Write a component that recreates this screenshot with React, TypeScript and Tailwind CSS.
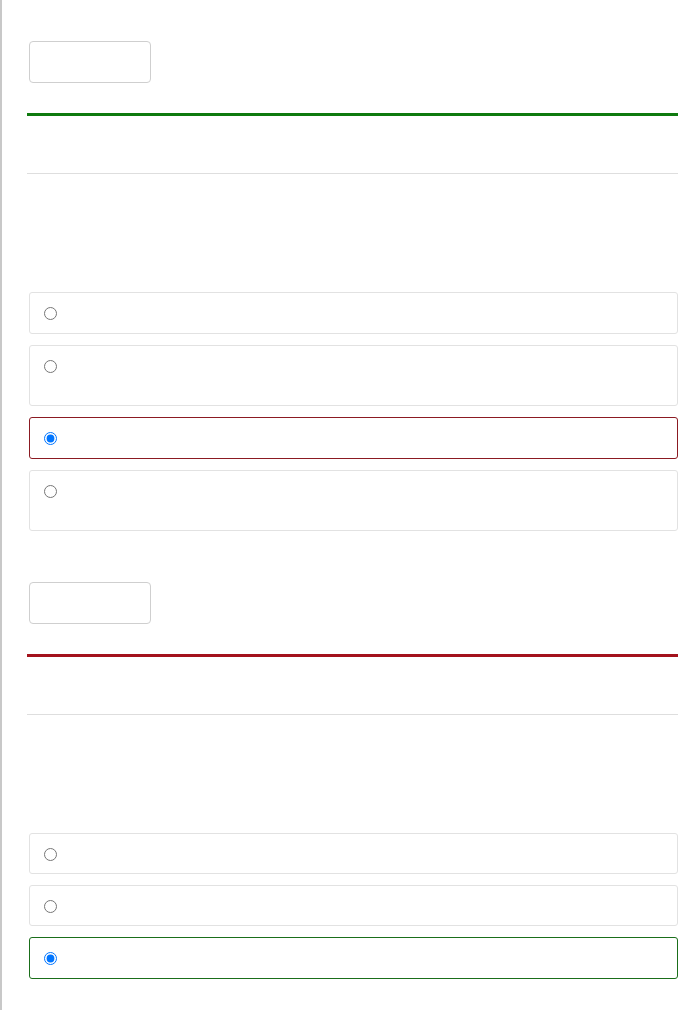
import React from "react";

type Opt = { h: number; checked?: boolean; state?: "bad" | "good" };

function Option({ h, checked, state }: Opt) {
  const border =
    state === "bad" ? "border-[#8b1a22]" : state === "good" ? "border-[#1a6e1a]" : "border-[#e2e2e2]";
  const height = h === 61 ? "h-[61px]" : h === 41 ? "h-[41px]" : "h-[42px]";
  return (
    <label className={`ml-[2px] flex items-start rounded-[3px] border bg-white px-[14px] pt-[14px] ${border} ${height}`}>
      <input type="radio" defaultChecked={checked} className="m-0 h-[13px] w-[13px]" />
    </label>
  );
}

function Section({ color, options }: { color: string; options: Opt[] }) {
  return (
    <div className="flex flex-col">
      <div className="ml-[2px] h-[42px] w-[122px] rounded-[4px] border border-[#cfcfcf] bg-white" />
      <div className={`mt-[30px] h-[3px] ${color}`} />
      <div className="mt-[57px] h-px bg-[#dedede]" />
      <div className="mt-[118px] flex flex-col gap-[11px]">
        {options.map((o, i) => (
          <Option key={i} {...o} />
        ))}
      </div>
    </div>
  );
}

export default function App() {
  return (
    <div className="flex min-h-[1010px] flex-col border-l-2 border-[#c8c8c8] bg-white pl-[25px] pt-[41px] font-['Liberation_Sans',sans-serif]">
      <Section
        color="bg-[#0f7a0f]"
        options={[{ h: 42 }, { h: 61 }, { h: 42, checked: true, state: "bad" }, { h: 61 }]}
      />
      <div className="mt-[51px] flex flex-col">
        <Section
          color="bg-[#a3121c]"
          options={[{ h: 41 }, { h: 41 }, { h: 42, checked: true, state: "good" }]}
        />
      </div>
    </div>
  );
}
